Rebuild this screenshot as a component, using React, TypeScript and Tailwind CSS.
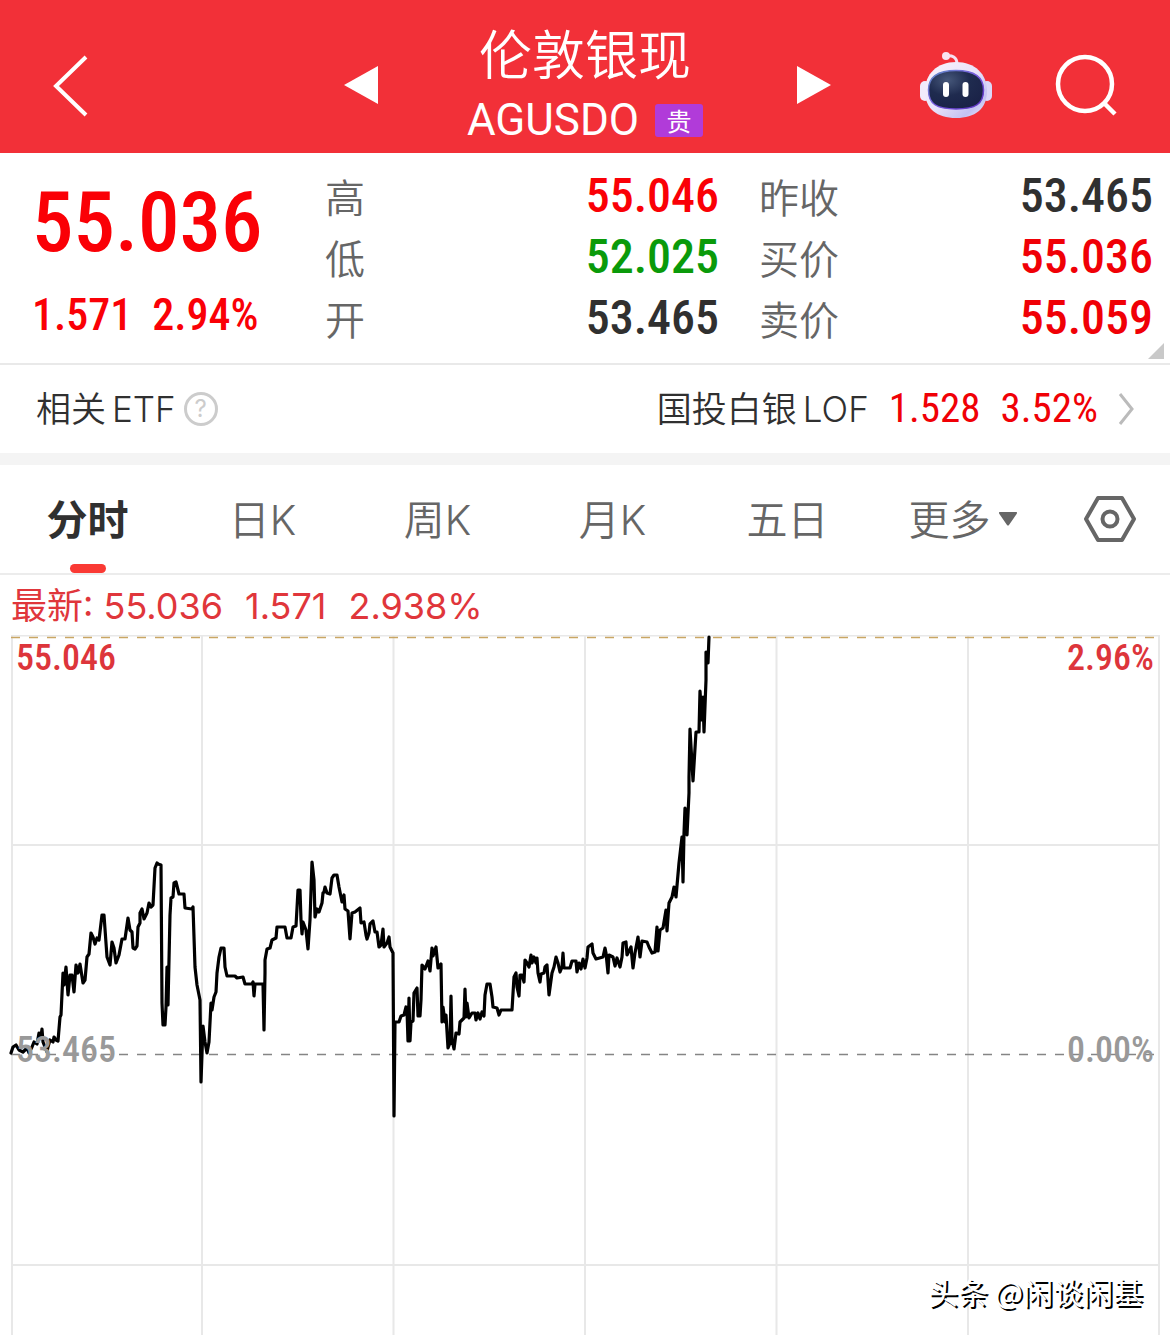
import React from "react";

const NUM = "font-['Roboto_Condensed','Roboto','Noto_Sans_CJK_SC',sans-serif]";

type Quote = { label: string; value: string; color: string };

const quotes: Quote[][] = [
  [
    { label: "高", value: "55.046", color: "text-[#fa0006]" },
    { label: "低", value: "52.025", color: "text-[#0a9a0a]" },
    { label: "开", value: "53.465", color: "text-[#303030]" },
  ],
  [
    { label: "昨收", value: "53.465", color: "text-[#303030]" },
    { label: "买价", value: "55.036", color: "text-[#f00006]" },
    { label: "卖价", value: "55.059", color: "text-[#f00006]" },
  ],
];

const tabs = ["分时", "日K", "周K", "月K", "五日"];

const priceLine =
  "11,1053 13,1047 16,1045 19,1050 23,1052 27,1048 29,1053 32,1047 34,1042 37,1044 39,1033 41,1037 42,1029 43,1042 47,1052 48,1047 50,1040 53,1042 54,1037 56,1040 58,1041 60,1017 61,1015 63,973 64,985 66,967 68,995 70,975 72,975 74,992 76,965 78,973 80,964 83,983 85,980 87,957 89,954 91,933 93,937 95,944 97,938 99,940 102,915 104,915 107,957 110,965 112,942 114,948 116,963 119,955 122,939 125,939 128,918 130,930 132,932 133,948 135,949 137,946 138,927 140,923 140,913 142,909 144,919 147,913 149,903 151,907 153,905 155,868 157,863 158,864 161,865 162,1003 163,1025 165,1025 166,1007 167,967 168,1005 170,915 171,898 173,897 174,883 176,882 179,894 184,894 185,908 192,909 193,907 195,967 197,985 200,1000 201,1082 " +
  "203,1026 205,1042 207,1053 209,1042 211,1003 212,1010 214,997 216,992 217,973 219,957 221,948 224,948 225,967 227,976 235,976 237,978 243,977 245,984 252,984 253,982 254,996 255,984 263,984 264,1030 265,973 265,960 267,949 270,948 272,940 276,938 277,927 285,927 287,938 291,938 293,927 296,926 298,890 300,890 301,920 302,934 303,922 306,930 308,949 310,920 312,862 314,880 315,917 317,909 319,912 322,903 323,893 324,892 325,887 327,893 330,894 332,878 334,875 337,875 339,887 342,902 344,895 345,909 348,911 350,939 352,913 355,912 360,908 361,923 364,922 366,935 367,939 369,933 370,924 373,921 375,932 377,932 379,947 381,945 383,929 384,947 387,943 389,937 390,947 393,953 394,1116 " +
  "395,1022 399,1022 401,1016 404,1015 406,1007 407,1010 408,1041 409,998 410,1041 411,1022 413,1021 414,993 417,988 418,1016 420,1016 421,1000 422,965 425,969 428,961 430,971 432,948 433,956 436,947 438,968 441,964 442,1022 443,1007 445,1022 446,1015 448,1048 450,1043 451,996 452,1040 454,1049 456,1033 459,1034 460,1022 464,1018 465,989 466,1017 467,1003 469,1018 472,1013 475,1013 476,1020 478,1013 480,1019 482,1012 484,1016 485,995 487,984 490,984 492,997 493,1007 497,1008 499,1015 501,1010 512,1010 514,977 516,973 517,987 519,996 520,975 522,975 524,982 525,960 527,963 529,967 531,955 532,963 534,957 536,963 537,958 538,973 540,982 541,974 544,973 545,967 547,965 549,995 552,973 554,967 556,957 558,963 560,972 562,967 563,953 564,968 570,968 572,961 576,961 577,972 579,963 581,969 583,959 585,968 587,958 " +
  "588,947 592,944 593,953 596,959 603,957 605,948 606,953 608,973 609,955 613,957 615,966 617,958 620,967 622,957 623,943 626,942 627,955 631,947 633,968 635,953 638,937 640,957 642,941 647,942 649,947 652,953 655,952 657,927 658,951 660,930 663,928 666,910 667,931 669,903 672,897 674,887 676,897 679,863 682,837 683,882 684,833 685,808 687,835 689,793 689,777 690,729 693,781 696,732 699,732 700,691 702,720 703,697 704,732 706,680 706,652 708,663 709,637";

function Robot() {
  return (
    <svg className="h-[68px] w-[74px]" viewBox="920 50 74 68" aria-hidden="true">
      <defs>
        <linearGradient id="shell" x1="0" y1="0" x2="1" y2="1">
          <stop offset="0" stopColor="#fbf4fb" />
          <stop offset="0.5" stopColor="#e9e2fa" />
          <stop offset="0.8" stopColor="#c3c1f2" />
          <stop offset="1" stopColor="#f3eefb" />
        </linearGradient>
        <linearGradient id="rim" x1="0" y1="0" x2="1" y2="1">
          <stop offset="0" stopColor="#5f8fc4" />
          <stop offset="0.5" stopColor="#7a5ae0" />
          <stop offset="1" stopColor="#5a2fc0" />
        </linearGradient>
        <radialGradient id="face" cx="0.35" cy="0.25" r="0.8">
          <stop offset="0" stopColor="#46577a" />
          <stop offset="0.5" stopColor="#1f2b4f" />
          <stop offset="1" stopColor="#1a2247" />
        </radialGradient>
      </defs>
      <path d="M947 55c6-1 11 1 11 8" fill="none" stroke="#f6dff0" strokeWidth="3" />
      <circle cx="947" cy="55" r="4" fill="#f9e3f2" />
      <rect x="921" y="80" width="10" height="20" rx="5" fill="#f1ebfb" />
      <rect x="983" y="80" width="10" height="20" rx="5" fill="#dcd8f8" />
      <path d="M957 61c19 0 31 12 31 29 0 18-12 27-31 27s-31-9-31-27c0-17 12-29 31-29z" fill="url(#shell)" />
      <path d="M957 69.500c18 0 27.500 6 27.500 19.500 0 14-8 19-27.500 19s-27.500-5-27.500-19c0-13.500 9.500-19.500 27.500-19.500z" fill="url(#face)" stroke="url(#rim)" strokeWidth="1.500" />
      <rect x="944" y="81" width="6" height="15" rx="3" fill="#fff" />
      <rect x="963.500" y="81" width="6" height="15" rx="3" fill="#fff" />
    </svg>
  );
}

function Header() {
  return (
    <header className="grid h-[153px] grid-cols-[1fr_492px_1fr] items-center bg-[#f23038] text-white">
      <button type="button" aria-label="返回" className="ml-[50px] mt-[18px] w-10">
        <svg className="h-[64px] w-10" viewBox="0 0 40 64" fill="none" stroke="#fff" strokeWidth="4" aria-hidden="true">
          <path d="M36 3 6 32l30 29" />
        </svg>
      </button>
      <div className="flex items-center justify-between">
        <button type="button" aria-label="上一个" className="mt-4">
          <svg className="h-[42px] w-10" viewBox="0 0 40 42" aria-hidden="true">
            <path d="M39 2v38L5 21z" fill="#fff" />
          </svg>
        </button>
        <div className="flex flex-col items-center pt-4">
          <h1 className="text-[53px] font-[350] leading-[71px]">伦敦银现</h1>
          <div className="flex items-center gap-4">
            <span className="font-['Roboto',sans-serif] text-[44px] leading-[64px]">AGUSDO</span>
            <span className="w-12 rounded-[3px] bg-[#b13bd9] text-center text-[25px] leading-[33px]">贵</span>
          </div>
        </div>
        <button type="button" aria-label="下一个" className="mt-4">
          <svg className="h-[42px] w-10" viewBox="0 0 40 42" aria-hidden="true">
            <path d="M6 2v38l34-19z" fill="#fff" />
          </svg>
        </button>
      </div>
      <div className="mr-[53px] mt-4 flex items-center justify-end gap-[60px]">
        <button type="button" aria-label="智能助手">
          <Robot />
        </button>
        <button type="button" aria-label="搜索">
          <svg className="h-[64px] w-[64px]" viewBox="0 0 64 64" fill="none" stroke="#fff" strokeWidth="4.500" aria-hidden="true">
            <circle cx="32" cy="31" r="27" />
            <path d="m51 50 11 11" />
          </svg>
        </button>
      </div>
    </header>
  );
}

function QuotePanel() {
  return (
    <section className="relative flex h-[212px] border-b-2 border-[#e9e9e9]">
      <div className={`w-[325px] shrink-0 pl-8 pt-4 text-[#fa0006] ${NUM}`}>
        <div className="text-[83px] font-medium leading-[108px]">55.036</div>
        <div className="flex gap-5 text-[44px] font-medium leading-[76px]">
          <span>1.571</span>
          <span>2.94%</span>
        </div>
      </div>
      <div className="grid flex-1 grid-cols-2 gap-10 pr-[17px] pt-3">
        {quotes.map((col, i) => (
          <dl key={i}>
            {col.map((q) => (
              <div key={q.label} className="flex h-[61px] items-center justify-between">
                <dt className="text-[40px] font-[350] leading-[60px] text-[#666]">{q.label}</dt>
                <dd className={`text-[48px] font-medium leading-[60px] ${q.color} ${NUM}`}>{q.value}</dd>
              </div>
            ))}
          </dl>
        ))}
      </div>
      <svg className="absolute bottom-1 right-[6px] h-4 w-4" viewBox="0 0 16 16" aria-hidden="true">
        <path d="M16 0v16H0z" fill="#c9c9c9" />
      </svg>
    </section>
  );
}

function EtfRow() {
  return (
    <section className="flex h-[100px] items-center justify-between border-b-12 border-[#f4f4f4] pl-9 pr-9 font-['Inter','Noto_Sans_CJK_SC',sans-serif] text-[35px] text-[#303030]">
      <div className="flex items-center gap-2">
        <span className="flex gap-1.5 font-[350]">
          <span>相关</span>
          <span>ETF</span>
        </span>
        <button type="button" aria-label="说明" className="size-[34px] rounded-full border-[3px] border-[#ccc] text-[24px] leading-[28px] text-[#ccc]">
          ?
        </button>
      </div>
      <a href="#lof" className="flex items-center gap-5">
        <span className="flex gap-1.5 font-[350]">
          <span>国投白银</span>
          <span>LOF</span>
        </span>
        <span className={`text-[41px] ${NUM} text-[#f00006]`}>1.528</span>
        <span className={`text-[41px] ${NUM} text-[#f00006]`}>3.52%</span>
        <svg className="h-[34px] w-4" viewBox="0 0 16 34" fill="none" stroke="#bbb" strokeWidth="3" aria-hidden="true">
          <path d="m2 2 12 15L2 32" />
        </svg>
      </a>
    </section>
  );
}

function Tabs() {
  return (
    <nav className="grid h-[110px] grid-cols-[repeat(6,minmax(0,175fr))_minmax(0,120fr)] border-b-2 border-[#ececec] font-['Inter','Noto_Sans_CJK_SC',sans-serif] text-[41px] text-[#666]">
      {tabs.map((t, i) => (
        <button
          key={t}
          type="button"
          className={i === 0 ? "relative pt-1 font-bold text-[#303030]" : "relative pt-1 font-[350]"}
        >
          {t}
          {i === 0 && <span className="absolute bottom-0 left-1/2 h-[9px] w-[36px] -translate-x-1/2 rounded-full bg-[#fa3a34]" />}
        </button>
      ))}
      <button type="button" className="flex items-center justify-center gap-2 font-[350]">
        <span className="pt-1">更多</span>
        <svg className="h-[14px] w-[18px]" viewBox="0 0 18 14" aria-hidden="true">
          <path d="M1 0h16q2 0 .6 2L10 13q-1 1-2 0L.4 2Q-1 0 1 0z" fill="#666" />
        </svg>
      </button>
      <button type="button" aria-label="设置" className="flex items-center justify-center">
        <svg className="h-[46px] w-[52px]" viewBox="0 0 52 46" fill="none" stroke="#666" strokeWidth="4" strokeLinejoin="round" aria-hidden="true">
          <path d="M14 2h24l12 21-12 21H14L2 23z" />
          <circle cx="26" cy="23" r="7.500" />
        </svg>
      </button>
    </nav>
  );
}

function Chart() {
  return (
    <section>
      <div className="flex h-[60px] items-center gap-[22px] pl-[11px] pt-px text-[36px] text-[#e0363b] font-['Inter','Noto_Sans_CJK_SC',sans-serif]">
        <span>最新: 55.036</span>
        <span>1.571</span>
        <span>2.938%</span>
      </div>
      <div className="relative">
        <svg className="block h-[700px] w-full" viewBox="0 635 1170 700" preserveAspectRatio="none" fill="none" role="img" aria-label="分时走势">
          <g stroke="#e8e8e8" strokeWidth="2">
            <path d="M11 635.500H1160M11 845H1160M11 1265H1160" />
            <path d="M12 635V1335M202 635V1335M393.500 635V1335M585 635V1335M776.500 635V1335M968 635V1335M1159 635V1335" />
          </g>
          <path d="M11 637.500H1158" stroke="#c9a664" strokeWidth="1.500" strokeDasharray="9 9" />
          <path d="M11 1054.500H1154" stroke="#858585" strokeWidth="1.500" strokeDasharray="9 9" />
          <polyline points={priceLine} stroke="#000" strokeWidth="3.200" strokeLinejoin="round" strokeLinecap="round" />
        </svg>
        <div className={`absolute inset-x-4 top-0 flex justify-between text-[36px] font-medium leading-[46px] text-[#dd353b] ${NUM}`}>
          <span>55.046</span>
          <span>2.96%</span>
        </div>
        <div className={`absolute inset-x-4 top-[392px] flex justify-between text-[36px] font-medium leading-[46px] text-[#999] ${NUM}`}>
          <span>53.465</span>
          <span>0.00%</span>
        </div>
        <div className="absolute bottom-[22px] right-[27px] text-[30px] leading-[44px] text-white [text-shadow:2px_2px_0_#000]">
          头条 @闲谈闲基
        </div>
      </div>
    </section>
  );
}

export default function App() {
  return (
    <main className="w-full bg-white font-['Noto_Sans_CJK_SC',sans-serif]">
      <Header />
      <QuotePanel />
      <EtfRow />
      <Tabs />
      <Chart />
    </main>
  );
}
